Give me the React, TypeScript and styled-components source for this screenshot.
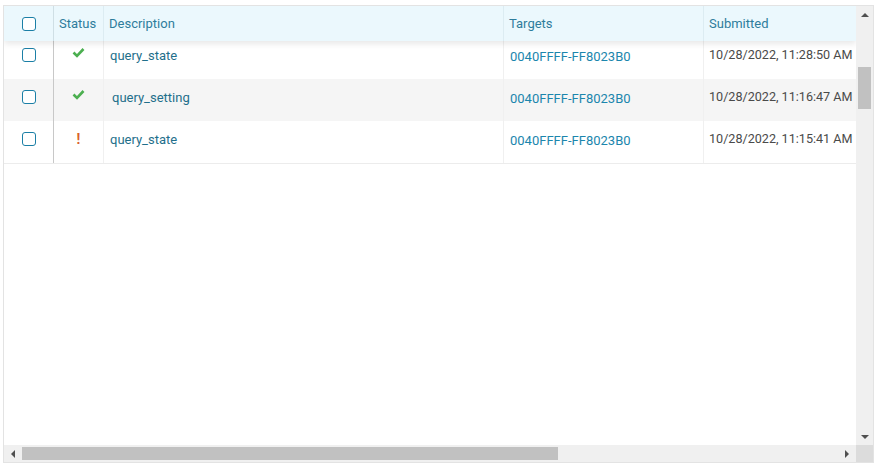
import styled, { createGlobalStyle } from 'styled-components';

const GlobalStyle = createGlobalStyle`
    html, body {
        margin: 0;
        padding: 0;
        background: #ffffff;
    }
    body {
        font-family: Roboto, "Open Sans", sans-serif;
        font-size: 13px;
    }
`

const Page = styled.div`
    width: 880px;
    height: 465px;
    padding: 5px 6px 2px 3px;
    box-sizing: border-box;
`

const Frame = styled.div`
    height: 100%;
    border: 1px solid #e3e3e3;
    box-sizing: border-box;
    display: grid;
    grid-template-columns: 1fr 17px;
    grid-template-rows: 1fr 17px;
    overflow: hidden;
`

const Viewport = styled.div`
    overflow: hidden;
    display: flex;
    flex-direction: column;
`

const cols = '49px 50px 400px 200px 1fr';

const HeaderRow = styled.div`
    display: grid;
    grid-template-columns: ${cols};
    height: 35px;
    background: #ebf8fd;
    box-shadow: 0 3px 6px rgba(0, 0, 0, 0.09);
    position: relative;
    z-index: 2;
`

const HeaderCell = styled.div<{ $line?: string }>`
    display: flex;
    align-items: center;
    padding-left: 5px;
    color: #2e7d9c;
    border-left: 1px solid ${p => p.$line || '#dcecf2'};
    white-space: nowrap;
    &:first-child {
        border-left: none;
        padding-left: 0;
        justify-content: center;
    }
`

const Body = styled.div`
    flex: 1;
    margin-top: -4px;
    position: relative;
    z-index: 1;
    display: flex;
    flex-direction: column;
`

const Row = styled.div<{ $alt?: boolean; $last?: boolean }>`
    display: grid;
    grid-template-columns: ${cols};
    height: 42px;
    flex: none;
    background: ${p => (p.$alt ? '#f5f5f5' : '#ffffff')};
    border-bottom: ${p => (p.$last ? '1px solid #ececec' : 'none')};
    box-sizing: content-box;
`

const Cell = styled.div<{ $color?: string; $line?: string; $pad?: number; $size?: number }>`
    display: flex;
    align-items: flex-start;
    padding-top: ${p => p.$pad ?? 11}px;
    padding-left: 6px;
    color: ${p => p.$color || '#444444'};
    font-size: ${p => p.$size ?? 13}px;
    border-left: 1px solid ${p => p.$line || '#f0f0f0'};
    white-space: nowrap;
    overflow: hidden;
    box-sizing: border-box;
`

const BoxCell = styled(Cell)`
    justify-content: center;
    padding-left: 0;
    padding-top: 11px;
    border-left: none;
`

const StatusCell = styled(Cell)`
    justify-content: center;
    padding-left: 0;
    padding-top: 10px;
`

const Check = styled.span`
    display: inline-block;
    width: 12px;
    height: 12px;
    border: 1.5px solid #1b7fa6;
    border-radius: 3px;
    background: #fff;
`

const Bang = styled.span`
    color: #d9622b;
    font-weight: 700;
    font-size: 14px;
    line-height: 16px;
`

const Filler = styled.div`
    flex: 1;
    display: grid;
    grid-template-columns: ${cols};
`

const VScroll = styled.div`
    background: #f0f0f0;
    display: flex;
    flex-direction: column;
    align-items: center;
    padding: 0 2px;
`

const HScroll = styled.div`
    background: #f0f0f0;
    display: flex;
    align-items: center;
    padding: 0 2px;
    grid-column: 1 / 2;
`

const Corner = styled.div`
    background: #dcdcdc;
`

const Arrow = styled.div`
    width: 14px;
    height: 17px;
    display: flex;
    align-items: center;
    justify-content: center;
    flex: none;
`

const VThumb = styled.div`
    width: 13px;
    height: 42px;
    background: #c1c1c1;
    margin-top: 44px;
`

const HThumb = styled.div`
    height: 13px;
    width: 536px;
    margin-left: 2px;
    background: #c1c1c1;
`

const Spacer = styled.div`
    flex: 1;
`

const CheckMark = () => (
    <svg width="13" height="11" viewBox="0 0 13 11">
        <path d="M1.5 5.5 L5 9 L11.5 2" fill="none" stroke="#4caf50" strokeWidth="2.6" strokeLinejoin="miter" />
    </svg>
)

const Tri = ({ dir }: { dir: 'up' | 'down' | 'left' | 'right' }) => {
    const pts = {
        up: '0,4 4,0 8,4',
        down: '0,0 8,0 4,4',
        left: '4,0 4,8 0,4',
        right: '0,0 0,8 4,4',
    }[dir];
    const vertical = dir === 'up' || dir === 'down';
    return (
        <svg width={vertical ? 8 : 4} height={vertical ? 4 : 8} viewBox={vertical ? '0 0 8 4' : '0 0 4 8'}>
            <polygon points={pts} fill="#505050" />
        </svg>
    )
}

const rows = [
    { status: 'ok', desc: 'query_state', target: '0040FFFF-FF8023B0', time: '10/28/2022, 11:28:50 AM', indent: 0 },
    { status: 'ok', desc: 'query_setting', target: '0040FFFF-FF8023B0', time: '10/28/2022, 11:16:47 AM', indent: 2 },
    { status: 'warn', desc: 'query_state', target: '0040FFFF-FF8023B0', time: '10/28/2022, 11:15:41 AM', indent: 0 },
]

const App = () => {
    return (
        <Page>
            <GlobalStyle />
            <Frame>
                <Viewport>
                    <HeaderRow>
                        <HeaderCell><Check /></HeaderCell>
                        <HeaderCell $line="#cfdfe5">Status</HeaderCell>
                        <HeaderCell>Description</HeaderCell>
                        <HeaderCell>Targets</HeaderCell>
                        <HeaderCell>Submitted</HeaderCell>
                    </HeaderRow>
                    <Body>
                        {rows.map((r, i) => (
                            <Row key={i} $alt={i === 1} $last={i === rows.length - 1}>
                                <BoxCell><Check /></BoxCell>
                                <StatusCell $line="#c8c8c8">
                                    {r.status === 'ok' ? <CheckMark /> : <Bang>!</Bang>}
                                </StatusCell>
                                <Cell $color="#1f6f8b" style={{ paddingLeft: 6 + r.indent }}>{r.desc}</Cell>
                                <Cell $color="#1b86ad" $pad={12}>{r.target}</Cell>
                                <Cell $color="#4a4a4a" $pad={10} $size={12.6} style={{ paddingLeft: 5 }}>{r.time}</Cell>
                            </Row>
                        ))}
                        <Filler />
                    </Body>
                </Viewport>
                <VScroll>
                    <Arrow><Tri dir="up" /></Arrow>
                    <VThumb />
                    <Spacer />
                    <Arrow><Tri dir="down" /></Arrow>
                </VScroll>
                <HScroll>
                    <Arrow><Tri dir="left" /></Arrow>
                    <HThumb />
                    <Spacer />
                    <Arrow><Tri dir="right" /></Arrow>
                </HScroll>
                <Corner />
            </Frame>
        </Page>
    )
}

export default App;
